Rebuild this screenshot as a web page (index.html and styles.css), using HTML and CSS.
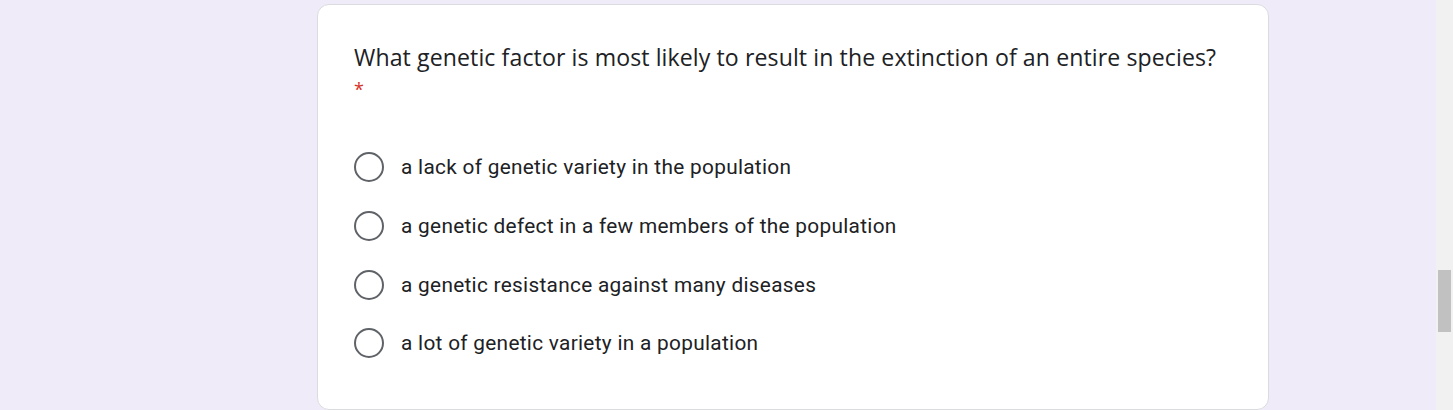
FILE: index.html
```html
<!DOCTYPE html>
<html>
<head>
<meta charset="UTF-8">
<title>Question</title>
<link rel="stylesheet" href="styles.css">
</head>
<body>
<div class="page">
  <div class="card">
    <div class="title">What genetic factor is most likely to result in the extinction of an entire species? <span class="req">*</span></div>
    <div class="options">
      <label class="option"><span class="radio"></span><span class="label">a lack of genetic variety in the population</span></label>
      <label class="option"><span class="radio"></span><span class="label">a genetic defect in a few members of the population</span></label>
      <label class="option"><span class="radio"></span><span class="label">a genetic resistance against many diseases</span></label>
      <label class="option"><span class="radio"></span><span class="label">a lot of genetic variety in a population</span></label>
    </div>
  </div>
  <div class="scrollbar"><div class="thumb"></div></div>
</div>
</body>
</html>
```
FILE: styles.css
```css
html, body {
  margin: 0;
  padding: 0;
  height: 100%;
  overflow: hidden;
}
body {
  background: #f0ebf8;
  color: #202124;
  font-family: Roboto, "Liberation Sans", sans-serif;
}
.page {
  display: flex;
  height: 100%;
}
.card {
  box-sizing: border-box;
  width: 952px;
  height: 406px;
  margin: 4px 0 0 317px;
  padding: 34px 36px 0 36px;
  background: #fff;
  border: 1px solid #dadce0;
  border-radius: 12px;
}
.title {
  font-family: "Open Sans", Roboto, sans-serif;
  font-size: 23.1px;
  line-height: 36px;
  letter-spacing: 0.1px;
}
.req {
  display: block;
  color: #d93025;
  font-size: 18px;
  line-height: 28px;
}
.options {
  display: flex;
  flex-direction: column;
  margin-top: 35px;
}
.option {
  display: flex;
  align-items: center;
  gap: 17px;
  height: 58.7px;
}
.radio {
  box-sizing: border-box;
  width: 30px;
  height: 30px;
  border: 2px solid #5f6368;
  border-radius: 50%;
  flex: none;
}
.label {
  font-size: 20.8px;
  letter-spacing: 0.3px;
}
.scrollbar {
  margin-left: auto;
  width: 17px;
  background: #f1f1f1;
  position: relative;
}
.thumb {
  position: absolute;
  left: 2px;
  right: 2px;
  top: 270px;
  height: 62px;
  background: #c1c1c1;
}
```
